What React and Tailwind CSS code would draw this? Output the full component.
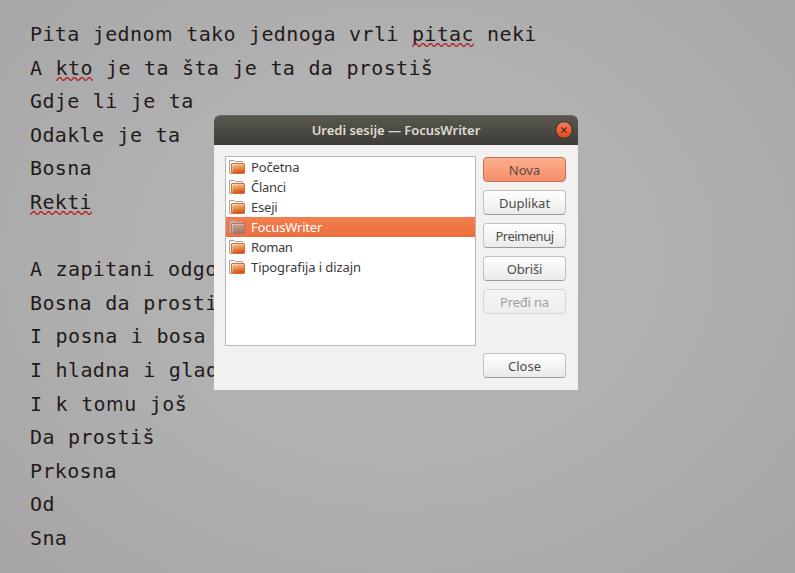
const MONO = "font-['DejaVu_Sans_Mono','Liberation_Mono',monospace]";
const SANS = "font-['Noto_Sans','Open_Sans',sans-serif]";

function Misspelled({ children }) {
  return (
    <span className="relative inline-block">
      {children}
      <svg className="absolute left-0 top-[25px] h-1 w-full" aria-hidden="true">
        <defs>
          <pattern id="wave" width="7.4" height="4" patternUnits="userSpaceOnUse">
            <path d="M-1.85 2 Q0 4.8 1.85 2 T5.55 2 T9.25 2" fill="none" stroke="#b5121b" strokeWidth="1.3" />
          </pattern>
        </defs>
        <rect width="100%" height="4" fill="url(#wave)" />
      </svg>
    </span>
  );
}

// Duospaced faces give the letter m one and a half cells.
function WideM() {
  return <span className="mx-[-0.8px] inline-block scale-x-88 font-['DejaVu_Sans',sans-serif]">m</span>;
}

function Folder({ selected }) {
  const id = selected ? "folder-sel" : "folder";
  return (
    <svg width="16" height="16" viewBox="0 0 16 16" className="shrink-0" aria-hidden="true">
      <defs>
        <linearGradient id={id} x1="0" y1="0" x2="0.2" y2="1">
          <stop offset="0" stopColor={selected ? "#cfa493" : "#f3cfa0"} />
          <stop offset="0.5" stopColor={selected ? "#bb8f7f" : "#ea9450"} />
          <stop offset="1" stopColor={selected ? "#a27868" : "#d64e18"} />
        </linearGradient>
      </defs>
      <path d="M0.5 14.5V1.5H5.5L6.5 2.5H13.5V5" fill={selected ? "#d3a899" : "#f8f7f6"} stroke={selected ? "#bd9385" : "#a6a6a4"} />
      <path d="M0.5 14.5H2.5" stroke={selected ? "#bd9385" : "#a6a6a4"} />
      <rect x="2.5" y="4.5" width="13" height="10" rx="0.5" fill={`url(#${id})`} stroke={selected ? "#a87b6c" : "#d4713f"} />
      <path d="M3.5 14V5.5H15" fill="none" stroke="#fff" strokeOpacity="0.3" />
    </svg>
  );
}

const lines = [
  <>Pita jedno<WideM /> tako jednoga vrli <Misspelled>pitac</Misspelled> neki</>,
  <>A <Misspelled>kto</Misspelled> je ta šta je ta da prostiš</>,
  "Gdje li je ta",
  "Odakle je ta",
  "Bosna",
  <Misspelled>Rekti</Misspelled>,
  "",
  "A zapitani odgo",
  "Bosna da prosti",
  "I posna i bosa",
  "I hladna i glad",
  <>I k to<WideM />u još</>,
  "Da prostiš",
  "Prkosna",
  "Od",
  "Sna",
];

const sessions = [
  { name: "Početna", spacing: "tracking-[-0.15px]" },
  { name: "Članci", spacing: "tracking-[-0.3px]" },
  { name: "Eseji", spacing: "tracking-[-0.2px]" },
  { name: "FocusWriter", spacing: "tracking-[-0.18px]", selected: true },
  { name: "Roman", spacing: "tracking-[-0.4px]" },
  { name: "Tipografija i dizajn", spacing: "tracking-[-0.08px]" },
];

const NORMAL =
  "border-[#c3bfba] border-b-[#9d9a97] bg-linear-to-b from-white to-[#ebeae9] text-[#4c4c4c]";

function Button({ children, look = NORMAL }) {
  return (
    <button className={`flex h-[25px] w-[83px] items-center justify-center rounded-[4px] border pt-px text-[13px] leading-none ${look}`}>
      {children}
    </button>
  );
}

export default function App() {
  return (
    <main className="relative h-[573px] w-[795px] overflow-hidden bg-[radial-gradient(ellipse_at_50%_45%,#b3b3b3_0%,#b1b1b1_45%,#a7a5a5_100%)]">
      <div className={`pl-[30px] pt-[18px] text-[20px] leading-[33.6px] tracking-[0.36px] [word-spacing:0.8px] text-[#241a1c] ${MONO}`}>
        {lines.map((line, i) => (
          <p key={i} className="h-[33.6px] whitespace-pre">{line}</p>
        ))}
      </div>

      <section className={`absolute left-[214px] top-[115px] flex h-[275px] w-[364px] flex-col overflow-hidden rounded-t-[6px] bg-[#f2f1f0] ${SANS}`}>
        <header className="relative flex h-[30px] shrink-0 items-center justify-center border-t border-[#66645c] bg-linear-to-b from-[#59574f] to-[#3e3d38]">
          <h1 className="text-[13px] font-semibold leading-none tracking-[-0.03px] text-[#dfdbd2]">Uredi sesije — FocusWriter</h1>
          <svg className="absolute right-[5px] top-[5px]" width="18" height="18" viewBox="0 0 18 18" aria-label="Close window">
            <defs>
              <linearGradient id="close" x1="0" y1="0" x2="0" y2="1">
                <stop offset="0" stopColor="#f58260" />
                <stop offset="0.5" stopColor="#ee6237" />
                <stop offset="1" stopColor="#de4a1c" />
              </linearGradient>
            </defs>
            <circle cx="9" cy="9" r="8.2" fill="url(#close)" stroke="#383731" />
            <path d="M6.3 6.3L11.7 11.7M11.7 6.3L6.3 11.7" stroke="#4a2a1a" strokeWidth="1.2" />
          </svg>
        </header>
        <div className="flex flex-1 gap-[7px] pl-[11px] pr-3 pt-[11px]">
          <ul className="h-[190px] w-[251px] border border-[#bab7b3] bg-white">
            {sessions.map((s) => (
              <li
                key={s.name}
                className={`flex h-5 items-center gap-[6px] pl-[3px] text-[13px] leading-none ${s.selected ? "bg-linear-to-b from-[#f37e4f] to-[#eb6f3c] text-white" : "text-[#3c3c3c]"}`}
              >
                <Folder selected={s.selected} />
                <span className={s.spacing}>{s.name}</span>
              </li>
            ))}
          </ul>
          <div className="flex flex-col gap-2 pt-px">
            <Button look="border-[#b8755c] bg-linear-to-b from-[#fdae8f] to-[#f58d66] text-[#5c4a44]">Nova</Button>
            <Button>Duplikat</Button>
            <Button><span className="tracking-[-0.5px]">Preimenuj</span></Button>
            <Button><span className="tracking-[-0.2px]">Obriši</span></Button>
            <Button look="border-[#d6d3d0] bg-linear-to-b from-[#f6f5f4] to-[#eeedec] text-[#a09f9e]"><span className="tracking-[-0.2px]">Pređi na</span></Button>
            <div className="mt-[31px]">
              <Button>Close</Button>
            </div>
          </div>
        </div>
      </section>
    </main>
  );
}
